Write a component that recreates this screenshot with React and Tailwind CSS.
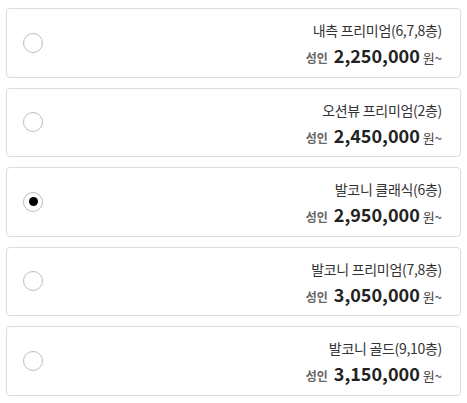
const options = [
  { id: 1, name: "내측 프리미엄(6,7,8층)", price: "2,250,000" },
  { id: 2, name: "오션뷰 프리미엄(2층)", price: "2,450,000" },
  { id: 3, name: "발코니 클래식(6층)", price: "2,950,000" },
  { id: 4, name: "발코니 프리미엄(7,8층)", price: "3,050,000" },
  { id: 5, name: "발코니 골드(9,10층)", price: "3,150,000" },
];

export default function App() {
  const selected = 3;

  return (
    <div
      className="w-[467px] h-[403px] bg-white pt-2 px-[6px] flex flex-col gap-[10px]"
      style={{ fontFamily: '"Noto Sans CJK KR", "Noto Sans", sans-serif' }}
    >
      {options.map((o) => (
        <div
          key={o.id}
          className="h-[69.5px] flex items-center justify-between border border-[#dcdcdc] rounded-[4px] pl-[16px] pr-[18px] shrink-0"
        >
          {/* radio */}
          <div className="w-[20px] h-[20px] rounded-full border border-[#bdbdbd] flex items-center justify-center bg-white">
            {selected === o.id && <div className="w-[9px] h-[9px] rounded-full bg-black" />}
          </div>

          {/* info */}
          <div className="flex flex-col items-end pt-[6px]">
            <p className="text-[14px] leading-[20px] text-[#333] tracking-[-0.3px]">{o.name}</p>
            <p className="flex items-baseline mt-[2px] leading-[26px]">
              <span className="text-[12px] font-bold text-[#666] mr-[6px]">성인</span>
              <span className="text-[18px] font-bold text-[#222] mr-[3px]">{o.price}</span>
              <span className="text-[13px] text-[#444]">원~</span>
            </p>
          </div>
        </div>
      ))}
    </div>
  );
}
